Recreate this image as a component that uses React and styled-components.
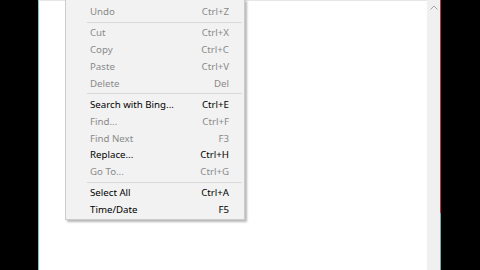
import React from 'react';
import styled, { createGlobalStyle } from 'styled-components';

const GlobalStyle = createGlobalStyle`
  html, body {
    margin: 0;
    padding: 0;
    background: #000;
    overflow: hidden;
  }
`;

const Screen = styled.div`
  width: 480px;
  height: 270px;
  display: flex;
  background: #000;
  font-family: "Segoe UI", "Noto Sans", "Open Sans", sans-serif;
`;

const Gutter = styled.div`
  width: ${p => p.$w}px;
  flex-shrink: 0;
  background: #000;
`;

const Editor = styled.div`
  position: relative;
  width: 388px;
  border-left: 1px solid #7cc4cf;
  border-top: 1px solid #e6e6e6;
  background: #fff;
`;

const Scrollbar = styled.div`
  width: 13px;
  background: #f0f0f0;
  display: flex;
  justify-content: center;
  padding-top: 5px;
  box-sizing: border-box;
`;

const Edge = styled.div`
  width: 1px;
  background: linear-gradient(#b8333f 0, #b8333f 79%, #6fa9ad 79%, #6fa9ad 100%);
`;

const Menu = styled.div`
  position: absolute;
  left: 26px;
  top: -2px;
  width: 178px;
  padding: 3px 0 1px;
  background: #f2f2f2;
  border: 1px solid #cccccc;
  box-shadow: 2px 2px 2px rgba(0, 0, 0, 0.28);
`;

const Item = styled.div`
  height: 16.75px;
  display: flex;
  align-items: center;
  justify-content: space-between;
  padding: 0 15px 0 24px;
  font-size: 9.7px;
  color: ${p => (p.$disabled ? '#8a8a8a' : '#000')};
  white-space: nowrap;
`;

const Separator = styled.div`
  height: 1px;
  margin: 2px 2px 1.7px 21px;
  background: #d9d9d9;
`;

const groups = [
  [['Undo', 'Ctrl+Z', true]],
  [
    ['Cut', 'Ctrl+X', true],
    ['Copy', 'Ctrl+C', true],
    ['Paste', 'Ctrl+V', true],
    ['Delete', 'Del', true],
  ],
  [
    ['Search with Bing...', 'Ctrl+E', false],
    ['Find...', 'Ctrl+F', true],
    ['Find Next', 'F3', true],
    ['Replace...', 'Ctrl+H', false],
    ['Go To...', 'Ctrl+G', true],
  ],
  [
    ['Select All', 'Ctrl+A', false],
    ['Time/Date', 'F5', false],
  ],
];

const ChevronUp = () => (
  <svg width="8" height="5" viewBox="0 0 8 5">
    <path d="M0.5 4.5 L4 1 L7.5 4.5" fill="none" stroke="#a3a3a3" strokeWidth="1" />
  </svg>
);

const App = () => {
  return (
    <Screen>
      <GlobalStyle />
      <Gutter $w={38} />
      <Editor>
        <Menu>
          {groups.map((group, gi) => (
            <React.Fragment key={gi}>
              {gi > 0 && <Separator />}
              {group.map(([label, key, disabled]) => (
                <Item key={label} $disabled={disabled}>
                  <span>{label}</span>
                  <span>{key}</span>
                </Item>
              ))}
            </React.Fragment>
          ))}
        </Menu>
      </Editor>
      <Scrollbar>
        <ChevronUp />
      </Scrollbar>
      <Edge />
      <Gutter $w={39} />
    </Screen>
  );
};

export default App;
